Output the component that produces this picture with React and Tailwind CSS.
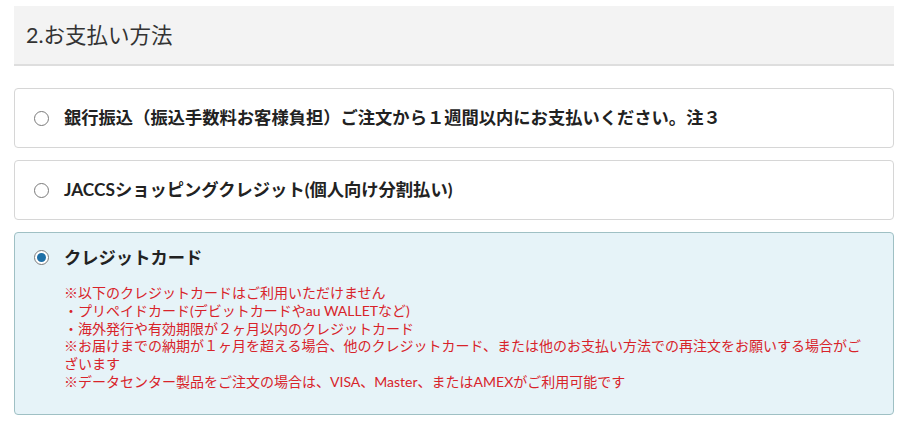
export default function App() {
  const Radio = ({ checked }) => (
    <span className="flex h-[15px] w-[15px] shrink-0 items-center justify-center rounded-full border border-[#7a7a7a] bg-white">
      {checked && <span className="h-[9px] w-[9px] rounded-full bg-[#1e6fa6]" />}
    </span>
  );
  return (
    <div className="min-h-[433px] w-[900px] bg-white pt-[6px] font-['Lato','Noto_Sans_CJK_JP',sans-serif] text-[#222]">
      <div className="ml-[14px] mr-[6px] flex h-[60px] items-center border-b-2 border-[#dedede] bg-[#f3f3f3] pl-[12px] text-[21.5px] text-[#333]">
        2.お支払い方法
      </div>
      <div className="ml-[14px] mr-[6px] mt-[22px] flex flex-col gap-[12px]">
        <div className="flex h-[60px] items-center gap-[15px] rounded-[4px] border border-[#d6d6d6] bg-white pl-[19px]">
          <Radio />
          <span className="text-[17.3px] font-bold text-[#222]">銀行振込（振込手数料お客様負担）ご注文から１週間以内にお支払いください。注３</span>
        </div>
        <div className="flex h-[60px] items-center gap-[15px] rounded-[4px] border border-[#d6d6d6] bg-white pl-[19px]">
          <Radio />
          <span className="text-[17.3px] font-bold text-[#222]">JACCSショッピングクレジット(個人向け分割払い)</span>
        </div>
        <div className="h-[183px] rounded-[4px] border border-[#9fc0c4] bg-[#e6f3f8] pl-[19px] pt-[12px]">
          <div className="flex items-center gap-[15px]">
            <Radio checked />
            <span className="text-[17.3px] font-bold text-[#222]">クレジットカード</span>
          </div>
          <div className="mt-[13px] pl-[30px] text-[14px] leading-[17.8px] text-[#d8232a]">
            <div>※以下のクレジットカードはご利用いただけません</div>
            <div>・プリペイドカード(デビットカードやau WALLETなど)</div>
            <div>・海外発行や有効期限が２ヶ月以内のクレジットカード</div>
            <div>※お届けまでの納期が１ヶ月を超える場合、他のクレジットカード、または他のお支払い方法での再注文をお願いする場合がご</div>
            <div>ざいます</div>
            <div>※データセンター製品をご注文の場合は、VISA、Master、またはAMEXがご利用可能です</div>
          </div>
        </div>
      </div>
    </div>
  );
}
